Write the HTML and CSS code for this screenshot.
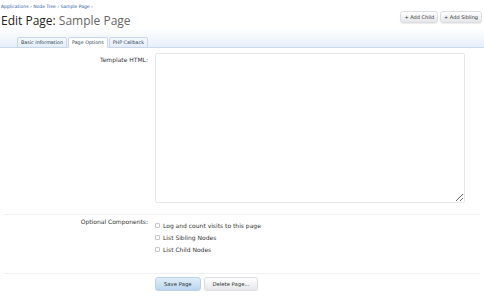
FILE: index.html
```html
<!DOCTYPE html>
<html lang="en">
<head>
<meta charset="UTF-8">
<title>Edit Page: Sample Page</title>
<link rel="stylesheet" href="styles.css">
</head>
<body>
<div class="header">
    <div class="header-left">
        <div class="breadcrumb">
            <a href="#">Applications</a> &rsaquo;
            <a href="#">Node Tree</a> &rsaquo;
            <a href="#">Sample Page</a> &rsaquo;
        </div>
        <h1>Edit Page: <span class="page-name">Sample Page</span></h1>
    </div>
    <div class="top-buttons">
        <a href="#" class="button">+ Add Child</a>
        <a href="#" class="button">+ Add Sibling</a>
    </div>
</div>
<div class="tab-bar">
    <ul class="tabs">
        <li>Basic Information</li>
        <li class="active">Page Options</li>
        <li>PHP Callback</li>
    </ul>
</div>
<form class="edit-form">
    <div class="form-row">
        <label class="row-label">Template HTML:</label>
        <div class="row-control">
            <textarea class="template-box"></textarea>
        </div>
    </div>
    <div class="form-row divided">
        <span class="row-label">Optional Components:</span>
        <ul class="checks row-control">
            <li><label><input type="checkbox"> Log and count visits to this page</label></li>
            <li><label><input type="checkbox"> List Sibling Nodes</label></li>
            <li><label><input type="checkbox"> List Child Nodes</label></li>
        </ul>
    </div>
    <div class="form-row divided submit-row">
        <span class="row-label"></span>
        <div class="row-control">
            <button type="button" class="button primary">Save Page</button>
            <button type="button" class="button">Delete Page...</button>
        </div>
    </div>
</form>
</body>
</html>
```
FILE: styles.css
```css
body {
    font-family: "DejaVu Sans", Verdana, sans-serif;
    font-size: 6px;
    color: #333;
    background-color: #fff;
    margin: 0;
}
a {
    color: #2b5ca6;
    text-decoration: none;
}
.header {
    display: flex;
    justify-content: space-between;
    align-items: flex-start;
    padding: 4px 2px 0 1px;
    height: 24px;
}
.breadcrumb {
    font-size: 4.5px;
    color: #2b5ca6;
}
h1 {
    font-family: "Open Sans", sans-serif;
    font-size: 12px;
    font-weight: normal;
    color: #222;
    margin: 3px 0 0;
}
h1 .page-name {
    color: #666;
}
.top-buttons {
    display: flex;
    gap: 2px;
    margin-top: 7px;
}
.button {
    font-family: "DejaVu Sans", Verdana, sans-serif;
    font-size: 5px;
    color: #333;
    background: linear-gradient(#fff, #e6e7ea);
    border: 1px solid #dcdde1;
    border-radius: 3px;
    padding: 2px 3px;
    box-shadow: 0 1px 1px rgba(0, 0, 0, 0.08);
    cursor: pointer;
}
.tab-bar {
    height: 19px;
    background: linear-gradient(#fff, #e7eff8);
    border-bottom: 1px solid #c9d8e8;
    display: flex;
    align-items: flex-end;
}
.tabs {
    list-style: none;
    display: flex;
    gap: 1px;
    margin: 0 0 -1px 17px;
    padding: 0;
}
.tabs li {
    font-size: 4.8px;
    color: #2d3f55;
    background: linear-gradient(#f5f9fd, #e4edf7);
    border: 1px solid #c9d8e8;
    border-radius: 2px 2px 0 0;
    padding: 2px 3px;
}
.tabs li.active {
    background: #fff;
    border-bottom-color: #fff;
}
.edit-form {
    padding-top: 5px;
}
.form-row {
    display: flex;
    gap: 7px;
}
.form-row .row-label {
    width: 148px;
    flex-shrink: 0;
    text-align: right;
    padding-top: 3px;
}
.form-row.divided {
    border-top: 1px solid #eef0f4;
    margin: 0 4px;
}
.form-row.divided .row-label {
    width: 144px;
}
.template-box {
    display: block;
    width: 310px;
    height: 150px;
    box-sizing: border-box;
    border: 1px solid #e4e6ea;
    border-radius: 2px;
    background: #fff;
    margin-bottom: 11px;
}
.checks {
    list-style: none;
    margin: 0;
    padding: 7px 0 15px;
}
.checks li {
    height: 12px;
}
.checks label {
    display: flex;
    align-items: center;
    gap: 3px;
}
.checks input {
    appearance: none;
    width: 5px;
    height: 5px;
    margin: 0;
    border: 1px solid #c4c6cb;
    border-radius: 1px;
    background: #fff;
}
.submit-row .row-control {
    display: flex;
    gap: 3px;
    padding-top: 3px;
}
.submit-row .button {
    font-size: 5.3px;
    padding: 3px 8px;
}
.button.primary {
    background: linear-gradient(#e1eef9, #b9d6ee);
    border-color: #bcd2e6;
}
```
